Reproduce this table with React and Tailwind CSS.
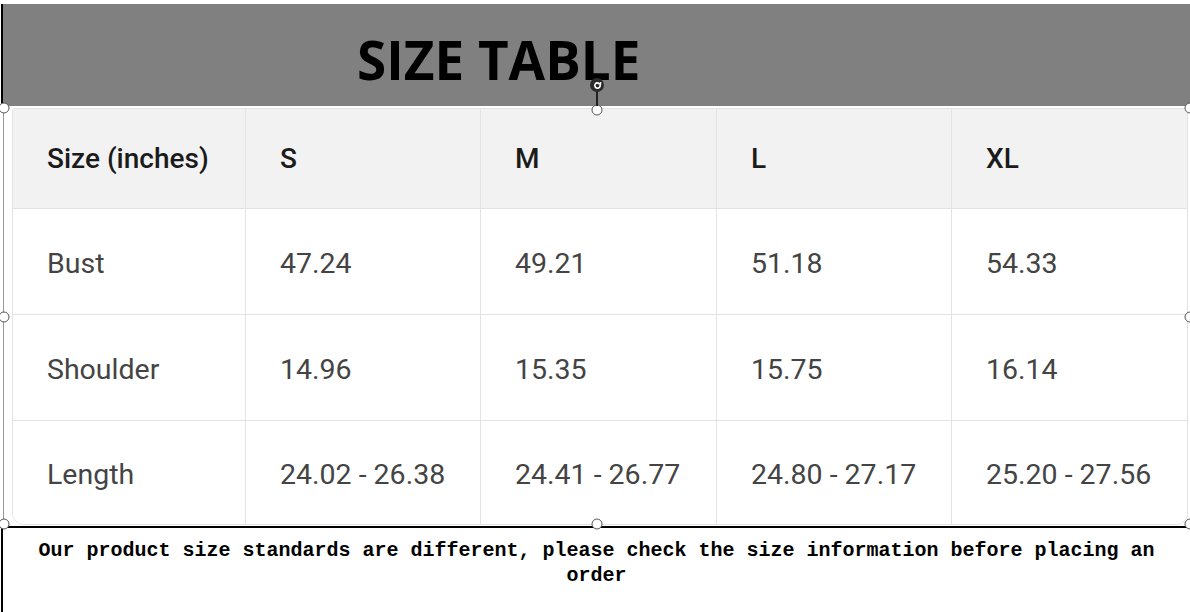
import React from "react";

const headers = ["Size (inches)", "S", "M", "L", "XL"];
const rows = [
  ["Bust", "47.24", "49.21", "51.18", "54.33"],
  ["Shoulder", "14.96", "15.35", "15.75", "16.14"],
  ["Length", "24.02 - 26.38", "24.41 - 26.77", "24.80 - 27.17", "25.20 - 27.56"],
];

function Handle({ className }) {
  return (
    <div
      className={
        "absolute w-[11px] h-[11px] rounded-full bg-white border border-[#555] -translate-x-1/2 -translate-y-1/2 " +
        className
      }
    />
  );
}

export default function App() {
  return (
    <div className="relative w-[1190px] h-[612px] bg-white overflow-hidden" style={{ fontFamily: 'Roboto, "Noto Sans", sans-serif' }}>
      {/* top white strip */}
      <div className="h-[4px] bg-white" />
      {/* gray title band */}
      <div className="h-[102px] bg-[#808080] border-l-2 border-black ml-[1px] flex items-center pl-[354px]">
        <div className="text-[53px] font-bold text-black leading-none pt-[8px]" style={{ fontFamily: '"Open Sans", sans-serif' }}>SIZE TABLE</div>
      </div>
      {/* table area */}
      <div className="h-[420px] border-l border-[#999] ml-[3px] pl-[8px] pr-[2px] pt-[2px] pb-[1px]">
        <div className="h-full border border-[#e3e3e3] rounded-b-[12px] rounded-t-[3px] overflow-hidden grid grid-cols-[233px_235px_236px_235px_1fr] grid-rows-[100px_106px_106px_1fr]">
          {headers.map((h, i) => (
            <div
              key={h}
              className={
                "bg-[#f2f2f2] flex items-center px-[34px] text-[28px] font-medium text-[#1b1b1b] whitespace-nowrap border-b border-[#e3e3e3] " +
                (i < 4 ? "border-r" : "")
              }
            >
              {h}
            </div>
          ))}
          {rows.map((r, ri) =>
            r.map((c, ci) => (
              <div
                key={ri + "-" + ci}
                className={
                  "bg-white flex items-center px-[34px] pt-[6px] text-[28.5px] text-[#444] whitespace-nowrap border-[#e3e3e3] " +
                  (ci < 4 ? "border-r " : "") +
                  (ri < 2 ? "border-b" : "")
                }
              >
                {c}
              </div>
            ))
          )}
        </div>
      </div>
      {/* black divider */}
      <div className="h-[2px] bg-black" />
      {/* footer */}
      <div className="h-[84px] border-l-2 border-black ml-[1px] pt-[10px] px-[30px] text-center text-[20px] leading-[25px] font-bold text-black" style={{ fontFamily: '"Liberation Mono", "DejaVu Sans Mono", monospace' }}>
        Our product size standards are different, please check the size information before placing an order
      </div>

      {/* selection handles */}
      <Handle className="left-[4px] top-[108px]" />
      <Handle className="left-[597px] top-[110px]" />
      <Handle className="left-[1190px] top-[108px]" />
      <Handle className="left-[4px] top-[317px]" />
      <Handle className="left-[1190px] top-[317px]" />
      <Handle className="left-[4px] top-[524px]" />
      <Handle className="left-[597px] top-[524px]" />
      <Handle className="left-[1190px] top-[524px]" />
      {/* rotate handle */}
      <div className="absolute left-[596px] top-[90px] w-[2px] h-[16px] bg-[#222]" />
      <div className="absolute left-[597px] top-[85px] -translate-x-1/2 -translate-y-1/2 w-[14px] h-[14px] rounded-full bg-[#2b2b2b] flex items-center justify-center">
        <svg width="9" height="9" viewBox="0 0 10 10" fill="none">
          <path d="M8 5a3 3 0 1 1-1-2.2" stroke="white" strokeWidth="1.8" strokeLinecap="round" />
          <path d="M8.6 1.2 8.4 3.6 6 3.3" stroke="white" strokeWidth="1.4" fill="none" />
        </svg>
      </div>
    </div>
  );
}
